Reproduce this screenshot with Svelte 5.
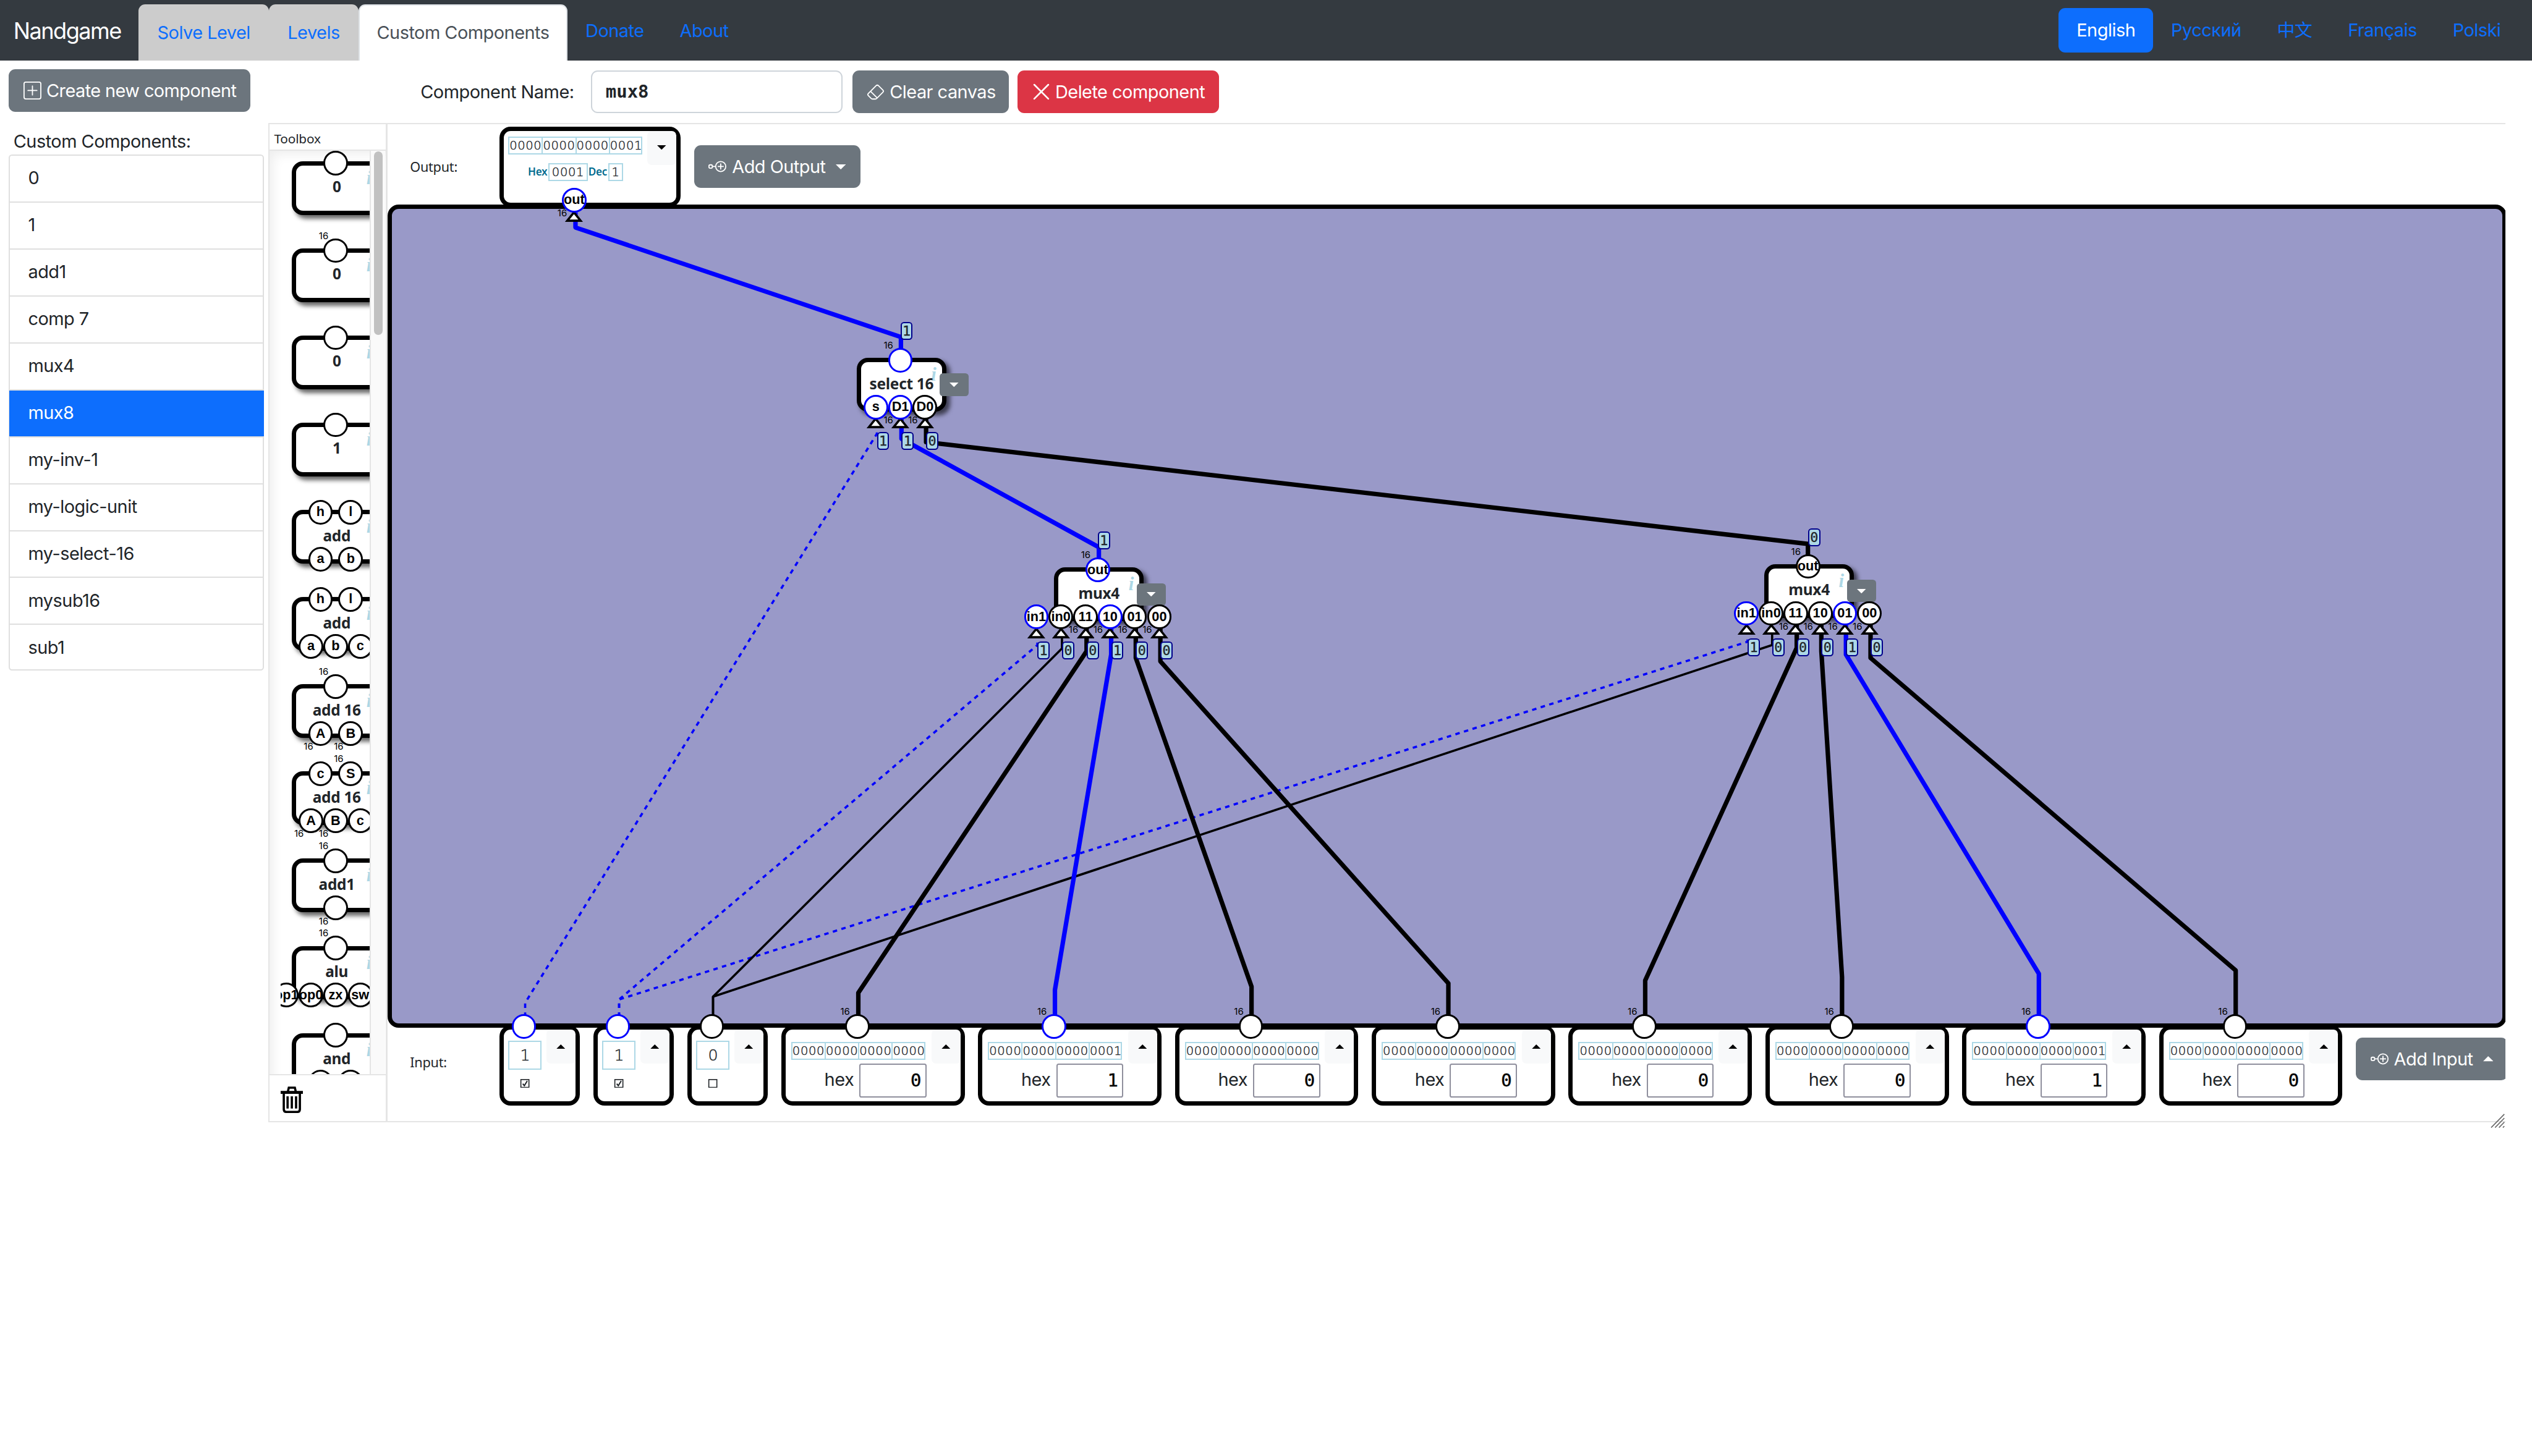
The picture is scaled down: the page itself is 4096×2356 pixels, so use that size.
<script>
  const tabs = ['Solve Level', 'Levels', 'Custom Components'];
  const languages = ['English', 'Русский', '中文', 'Français', 'Polski'];
  const customComponents = [
    '0', '1', 'add1', 'comp 7', 'mux4', 'mux8', 'my-inv-1',
    'my-logic-unit', 'my-select-16', 'mysub16', 'sub1'
  ];
  const selected = 'mux8';

  // A port is { t: label, w: 16-bit, on: carries a non-zero value, v: shown value }
  const p = (t = '', w = false) => ({ t, w });
  const toolbox = [
    { name: '0', out: [p()], ins: [] },
    { name: '0', out: [p('', true)], ins: [] },
    { name: '0', out: [p()], ins: [] },
    { name: '1', out: [p()], ins: [] },
    { name: 'add', out: [p('h'), p('l')], ins: [p('a'), p('b')] },
    { name: 'add', out: [p('h'), p('l')], ins: [p('a'), p('b'), p('c')] },
    { name: 'add 16', out: [p('', true)], ins: [p('A', true), p('B', true)] },
    { name: 'add 16', out: [p('c'), p('S', true)], ins: [p('A', true), p('B', true), p('c')] },
    { name: 'add1', out: [p('', true)], ins: [p('', true)] },
    { name: 'alu', out: [p('', true)], ins: [p('op1'), p('op0'), p('zx'), p('sw'), p('X')] },
    { name: 'and', out: [p()], ins: [p('a'), p('b')] }
  ];

  const q = (t, v, w = false) => ({ t, w, v, on: v === '1' });
  const nodes = [
    {
      name: 'select 16', x: 766, y: 320, out: [q('', '1', true)],
      ins: [q('s', '1'), q('D1', '1', true), q('D0', '0', true)]
    },
    {
      name: 'mux4', x: 942.5, y: 507.5, out: [q('out', '1', true)],
      ins: [q('in1', '1'), q('in0', '0'), q('11', '0', true), q('10', '1', true), q('01', '0', true), q('00', '0', true)]
    },
    {
      name: 'mux4', x: 1577.5, y: 504.5, out: [q('out', '0', true)],
      ins: [q('in1', '1'), q('in0', '0'), q('11', '0', true), q('10', '0', true), q('01', '1', true), q('00', '0', true)]
    }
  ];

  const bits = ['1', '1', '0'];
  const words = [0, 1, 0, 0, 0, 0, 1, 0];

  // Wires run from the output that drives them to the input they feed.
  const wires = [
    { kind: 'bit on', pts: '469.5,917.5 469.5,897 784,388 784,386' },
    { kind: 'bit on', pts: '553.5,917.5 553.5,894 927.5,577 927.5,574' },
    { kind: 'bit on', pts: '553.5,917.5 553.5,894 1562.5,574 1562.5,571' },
    { kind: 'bit', pts: '637.5,918 637.5,891.5 949.5,580 949.5,565' },
    { kind: 'bit', pts: '637.5,918 637.5,891.5 1584.5,577 1584.5,562' },
    { kind: 'word', pts: '767.4,918 767.4,888 971.5,582.5 971.5,560' },
    { kind: 'word on', pts: '943.2,918 943.2,885.5 993.5,585.5 993.5,560' },
    { kind: 'word', pts: '1119,918 1119,882.5 1015.5,588.5 1015.5,560' },
    { kind: 'word', pts: '1295,918 1295,879.5 1037.5,591.5 1037.5,560' },
    { kind: 'word', pts: '1471,918 1471,877 1606.5,579.5 1606.5,557' },
    { kind: 'word', pts: '1647,918 1647,874 1628.5,582.5 1628.5,557' },
    { kind: 'word on', pts: '1823,918 1823,871 1650.5,585.5 1650.5,557' },
    { kind: 'word', pts: '1999,918 1999,868 1672.5,588.5 1672.5,557' },
    { kind: 'word on', pts: '982.5,508 982.5,489.5 806,392.5 806,374' },
    { kind: 'word', pts: '1616.5,506 1616.5,486.5 828,395.5 828,374' },
    { kind: 'word on', pts: '805.5,321 805.5,301.5 514.5,203.5 514.5,190' }
  ];

  const slot = (i, n) => 39 + (i - (n - 1) / 2) * (n === 2 ? 27 : 22);
  const nibbles = (n) => n.toString(2).padStart(16, '0').match(/.{4}/g);
</script>

{#snippet caret(up)}
  <svg class="caret" viewBox="0 0 8 4"><path d={up ? 'M0 4L4 0L8 4z' : 'M0 0L4 4L8 0z'} /></svg>
{/snippet}

{#snippet nodePlus()}
  <svg class="icon" viewBox="0 0 16 16" fill="none" stroke="currentColor">
    <rect x=".5" y="6.5" width="3" height="3" rx="1" />
    <circle cx="11" cy="8" r="4.5" />
    <path d="M3.5 8h3M11 5.3v5.4M8.3 8h5.4" />
  </svg>
{/snippet}

{#snippet port(c, left, top, side)}
  <div class="port" class:on={c.on} style:left="{left}px" style:top="{top}px">
    {#if side === 'in' && c.v !== undefined}
      <svg class="arrow" viewBox="0 0 16 11"><path d="M8 2L14 9.5H2z" /></svg>
    {/if}
    <span class="ring">{c.t}</span>
    {#if c.w}<span class="width {side}">16</span>{/if}
    {#if c.v !== undefined && !c.bare}<span class="value {side}">{c.v}</span>{/if}
  </div>
{/snippet}

{#snippet gate(g)}
  <div class="body"></div>
  <span class="info">i</span>
  <span class="name">{g.name}</span>
  {#if g.x}<button class="menu">{@render caret(false)}</button>{/if}
  {#each g.out as c, i}{@render port(c, slot(i, g.out.length), 2, 'out')}{/each}
  {#each g.ins as c, i}{@render port(c, slot(i, g.ins.length), 44, 'in')}{/each}
{/snippet}

{#snippet binary(n)}
  <div class="binary">
    {#each nibbles(n) as nib}<span>{nib}</span>{/each}
  </div>
{/snippet}

<div class="page">
  <header>
    <div class="brand">Nandgame</div>
    <nav class="tabs">
      {#each tabs as t, i}<a class="tab" class:active={i === 2}>{t}</a>{/each}
      <a class="plain">Donate</a>
      <a class="plain">About</a>
    </nav>
    <nav class="langs">
      {#each languages as l, i}<a class="lang" class:active={i === 0}>{l}</a>{/each}
    </nav>
  </header>

  <main>
    <aside>
      <button class="btn create">
        <svg class="icon" viewBox="0 0 16 16" fill="none" stroke="currentColor">
          <rect x=".5" y=".5" width="15" height="15" rx="1.5" />
          <path d="M8 4v8M4 8h8" stroke-linecap="round" />
        </svg>
        <span>Create new component</span>
      </button>
      <div class="label">Custom Components:</div>
      <ul>
        {#each customComponents as c}<li class:selected={c === selected}>{c}</li>{/each}
      </ul>
    </aside>

    <section class="editor">
      <div class="toolbar">
        <span class="cname">Component Name:</span>
        <div class="field">{selected}</div>
        <button class="btn clear">
          <svg class="icon" viewBox="0 0 16 16" fill="currentColor">
            <path d="M8.086 2.207a2 2 0 0 1 2.828 0l3.879 3.879a2 2 0 0 1 0 2.828l-5.5 5.5A2 2 0 0 1 7.879 15H5.12a2 2 0 0 1-1.414-.586l-2.5-2.5a2 2 0 0 1 0-2.828zm2.121.707a1 1 0 0 0-1.414 0L4.16 7.547l5.293 5.293 4.633-4.633a1 1 0 0 0 0-1.414zM8.746 13.547 3.453 8.254 1.914 9.793a1 1 0 0 0 0 1.414l2.5 2.5a1 1 0 0 0 .707.293H7.88a1 1 0 0 0 .707-.293z" />
          </svg>
          <span>Clear canvas</span>
        </button>
        <button class="btn danger">
          <svg class="icon" viewBox="0 0 16 16" fill="none" stroke="currentColor" stroke-width="1.5" stroke-linecap="round">
            <path d="M1.7 1.7L14.3 14.3M14.3 1.7L1.7 14.3" />
          </svg>
          <span>Delete component</span>
        </button>
      </div>

      <div class="workspace">
        <div class="toolbox">
          <div class="title">Toolbox</div>
          <div class="scroller">
            <div class="window">
              {#each toolbox as g}<div class="gate">{@render gate(g)}</div>{/each}
            </div>
            <div class="track"><div class="thumb"></div></div>
          </div>
          <div class="trash">
            <svg viewBox="0 0 20 24" fill="none" stroke="#000" stroke-width="2">
              <path d="M0 5.3h20" stroke-width="2.6" />
              <path d="M6.5 4.5L7.3 1.1H12.7L13.5 4.5" />
              <path d="M2.8 6V20.5Q2.8 22.8 5 22.8H15Q17.2 22.8 17.2 20.5V6" />
              <path d="M6.2 8.8V19.8M10 8.8V19.8M13.8 8.8V19.8" />
            </svg>
          </div>
        </div>

        <div class="board">
          <div class="row outputs">
            <span class="rowlabel">Output:</span>
            <div class="card output">
              <div class="content">
                {@render binary(1)}
                <div class="formats">
                  <b>Hex</b><span class="box">0001</span><b>Dec</b><span class="box">1</span>
                </div>
              </div>
              <button class="toggle">{@render caret(false)}</button>
              {@render port({ t: 'out', w: true, on: true, v: '', bare: true }, 63, 62, 'in')}
            </div>
            <button class="btn add">{@render nodePlus()}<span>Add Output</span>{@render caret(false)}</button>
          </div>

          <div class="canvas"></div>

          <svg class="wires" viewBox="346.5 183 1894.5 736">
            {#each wires as w}<polyline class={w.kind} points={w.pts} />{/each}
          </svg>
          <div class="nodes">
            {#each nodes as g}
              <div class="gate placed" style:left="{g.x - 346.5}px" style:top="{g.y - 111}px">{@render gate(g)}</div>
            {/each}
          </div>

          <div class="row inputs">
            <span class="rowlabel">Input:</span>
            {#each bits as b}
              <div class="card bit">
                <div class="content">
                  <span class="digit">{b}</span>
                  <svg class="check" viewBox="0 0 9 8" fill="none" stroke="#212529">
                    <rect x=".9" y=".5" width="7.2" height="7" stroke-width=".9" />
                    {#if b === '1'}<path d="M2.6 4.2L4 5.9L6.6 1.6" stroke-width="1.1" />{/if}
                  </svg>
                </div>
                <button class="toggle">{@render caret(true)}</button>
                {@render port({ t: '', on: b === '1' }, 22, 1, 'out')}
              </div>
            {/each}
            {#each words as w}
              <div class="card word">
                <div class="content">
                  {@render binary(w)}
                  <div class="hex"><span>hex</span><span class="entry">{w}</span></div>
                </div>
                <button class="toggle">{@render caret(true)}</button>
                {@render port({ t: '', w: true, on: w === 1 }, 68, 1, 'out')}
              </div>
            {/each}
            <button class="btn add">{@render nodePlus()}<span>Add Input</span>{@render caret(true)}</button>
          </div>
        </div>
      </div>
      <svg class="resizer" viewBox="0 0 13 13" stroke="#666" stroke-width=".9">
        <path d="M.5 12.5L12.3 .5M4 12.5L12.3 4M7.5 12.5L12.3 7.6M11 12.5L12.3 11.2" />
      </svg>
    </section>
  </main>
</div>

<style>
  :global(body) { margin: 0; background: #fff; overflow: hidden; }
  .page, .page * { box-sizing: border-box; }
  .page {
    zoom: 1.80919;
    width: 2264px;
    height: 1302px;
    overflow: hidden;
    background: #fff;
    color: #212529;
    font: 16px/24px Inter, "Noto Sans CJK SC", sans-serif;
    letter-spacing: -0.29px;
  }
  button { border: 0; margin: 0; padding: 0; font: inherit; letter-spacing: inherit; color: inherit; }
  svg { display: block; flex: none; }

  header { display: flex; height: 54px; background: #343a40; }
  .brand { width: 124px; padding: 12.5px 0 0 12px; font-size: 20px; line-height: 30px; color: #fff; letter-spacing: -0.85px; }
  .tabs { display: flex; padding-top: 4px; color: #0d6efd; }
  .tab {
    width: 116.5px; height: 50px; padding-top: 13px; text-align: center;
    background: #ccc; border-radius: 6px 6px 0 0;
  }
  .tab:nth-child(2) { width: 80px; }
  .tab.active { width: 187px; background: #fff; color: #495057; border: 1.2px solid #dee2e6; border-bottom: 0; padding-top: 12px; }
  .plain { padding: 11.5px 16px 0; }
  .langs { display: flex; margin-left: auto; padding: 7px 12px 0 0; color: #0d6efd; }
  .lang { height: 40px; padding: 8px 16px; border-radius: 6px; }
  .lang.active { background: #0d6efd; color: #fff; }

  main { display: flex; }
  aside { width: 240px; padding: 8px 4px 0 8px; }
  .btn {
    display: flex; align-items: center; height: 38px; border-radius: 6px;
    background: #6c757d; color: #fff; white-space: nowrap; padding: 0 13px; flex: none;
  }
  .icon { width: 16px; height: 16px; margin-right: 4.5px; }
  .create { width: 216px; letter-spacing: -0.33px; }
  .label { height: 38px; padding: 14.5px 0 0 4px; }
  ul { list-style: none; margin: 0; padding: 0; border: 1.2px solid #dfdfdf; border-radius: 3px; width: 228px; height: 462px; }
  li { height: 42px; padding: 8px 16px; border-bottom: 1.2px solid #dfdfdf; }
  li:last-child { border-bottom: 0; }
  li.selected { background: #0d6efd; color: #fff; margin: 0 -1px; padding-left: 17px; }

  .editor { position: relative; width: 2000px; }
  .toolbar { display: flex; align-items: center; height: 56px; }
  .cname { width: 288.5px; padding-left: 136px; white-space: nowrap; }
  .field {
    width: 225px; height: 38px; margin-right: 8.5px; padding: 6px 12px; border: 1.2px solid #ced4da;
    border-radius: 6px; font: bold 16px/24px "DejaVu Sans Mono", monospace; letter-spacing: 0;
  }
  .clear { width: 140px; margin-right: 8px; }
  .danger { width: 180px; background: #dc3545; }

  .workspace { display: flex; width: 2000px; height: 894px; overflow: hidden; border: 1.2px solid #e5e5e5; border-right: 0; }
  .toolbox { width: 105.5px; flex: none; display: flex; flex-direction: column; border-right: 1.7px solid #e5e5e5; }
  .title { height: 23.5px; padding: 3px 0 0 4px; font: 11.5px/20px "Noto Sans", sans-serif; letter-spacing: -0.1px; border-bottom: 1.2px solid #e5e5e5; }
  .scroller { display: flex; height: 826px; flex: none; box-shadow: inset 7px 7px 10px -4px rgba(0, 0, 0, .07); }
  .window { width: 79.5px; margin-left: 10px; padding: 9.5px 0 0 10px; overflow: hidden; }
  .window .gate { margin-bottom: 30px; }
  .track { width: 14px; background: #fafafa; border-left: 1.2px solid #e5e5e5; padding: 1px 0 0 2.5px; }
  .thumb { width: 8px; height: 164px; border-radius: 4px; background: #c1c1c1; }
  .trash { flex: 1; border-top: 1.2px solid #e5e5e5; padding: 10px 0 0 10px; }
  .trash svg { width: 20px; height: 24px; }

  .board { position: relative; width: 1895px; flex: none; }
  .row { display: flex; }
  .rowlabel { width: 100px; margin-right: -12px; padding-left: 20px; font: 12px/20px "Noto Sans", sans-serif; letter-spacing: -0.15px; flex: none; }
  .outputs { height: 72px; padding-top: 2px; gap: 12px; align-items: center; }
  .outputs .card, .outputs .btn { margin-bottom: -2px; }
  .outputs .rowlabel { padding-top: 2px; }
  .canvas { position: relative; z-index: 1; height: 736px; border: 4px solid #000; border-radius: 10px; background: #9999c8; }
  .wires { position: absolute; z-index: 2; left: 0; top: 72px; width: 1894.5px; height: 736px; overflow: visible; }
  polyline { fill: none; stroke: #000; stroke-linejoin: round; }
  polyline.bit { stroke-width: 2; }
  polyline.word { stroke-width: 4; }
  polyline.on { stroke: #00f; }
  polyline.bit.on { stroke-dasharray: 4 4; }
  .nodes { position: absolute; z-index: 3; left: 0; top: 0; }

  .inputs { gap: 12px; margin-top: -2px; align-items: flex-start; }
  .inputs .rowlabel { margin-top: 23px; }
  .card {
    position: relative; display: flex; justify-content: space-between; height: 72px; flex: none;
    border: 4px solid #000; border-radius: 10px; background: #fff;
  }
  .inputs .card { z-index: 2; }
  .output { width: 162px; }
  .bit.card { width: 72px; }
  .word.card { width: 164px; }
  .content { display: flex; flex-direction: column; align-items: center; padding: 5px 0 0 4px; }
  .word .content { padding: 11px 0 0 5px; }
  .bit .content { padding-top: 10px; }
  .toggle { display: flex; justify-content: center; width: 26px; height: 30.5px; border-radius: 4px; background: #f8f9fa; color: #000; padding-top: 13px; }
  .caret { width: 8px; height: 4px; fill: currentColor; }

  .binary { display: flex; width: 120px; height: 16px; border: 1.2px solid #add8e6; }
  .binary span { flex: 1; text-align: center; }
  .binary span + span { border-left: 1.2px solid #add8e6; }
  .binary, .box, .digit { -webkit-text-stroke: .25px #212529; }
  .binary, .box { font: 200 10.8px/14px "DejaVu Sans", "DejaVu Sans Light", sans-serif; letter-spacing: .35px; }
  .formats { display: flex; margin-top: 8px; height: 16px; }
  .formats b { font: 600 9.5px/15px "Noto Sans", sans-serif; letter-spacing: -0.2px; color: #006b8f; margin: 0 1px 0 .5px; }
  .box { border: 1.2px solid #add8e6; padding: 0 2.1px; }
  .digit { width: 30px; height: 26px; border: 1.2px solid #add8e6; text-align: center; font: 200 14px/24px "DejaVu Sans", "DejaVu Sans Light", sans-serif; }
  .check { width: 9px; height: 8px; margin-top: 8px; }
  .hex { display: flex; align-self: flex-end; margin: 3.5px -1px 0 0; gap: 5px; }
  .hex > span:first-child { line-height: 29px; }
  .entry {
    width: 60px; height: 30px; border: 1.2px solid #8f8f9d; border-radius: 2px; padding-right: 3.5px;
    text-align: right; font: 500 16px/28.5px "DejaVu Sans Mono", monospace; letter-spacing: 0; color: #000;
    -webkit-text-stroke: .25px #000;
  }
  .add .icon { margin-right: 5px; }
  .add .caret { width: 9px; height: 4.5px; margin-left: 9px; }
  .inputs .add { margin-top: 11px; }

  .gate { position: relative; width: 80px; height: 48px; flex: none; }
  .gate.placed { position: absolute; }
  .body {
    height: 48px; border: 4px solid #000; border-radius: 10px; background: #fff;
    box-shadow: 3px 3px 4px rgba(0, 0, 0, .6);
  }
  .name {
    position: absolute; left: -20px; width: 120px; top: 13px; text-align: center;
    font: 700 13.5px/20px "Noto Sans", sans-serif; letter-spacing: -0.15px;
  }
  .info { position: absolute; left: 66.5px; top: 5px; font: italic bold 17px/20px "Liberation Serif", serif; color: #add8e6; }
  .menu { position: absolute; left: 74px; top: 14px; width: 26px; height: 20px; border-radius: 3px; background: #6c757d; color: #fff; padding: 6px 9px; }
  .port { position: absolute; width: 0; height: 0; z-index: 4; }
  .ring {
    position: absolute; left: -11px; top: -11px; width: 22px; height: 22px; border: 2px solid #000; border-radius: 50%;
    background: #fff; color: #000; display: flex; align-items: center; justify-content: center;
    font: bold 12px/18px "Liberation Sans", Arial, sans-serif; letter-spacing: 0;
  }
  .on .ring { border-color: #00f; }
  .card .port { margin: -4px 0 0 -4px; }
  .card.output .port { margin: 0; }
  .arrow { position: absolute; left: -8px; top: 8.7px; width: 16px; height: 11px; fill: #fff; stroke: #000; stroke-width: 2; }
  .width { position: absolute; left: -15px; font: 8.3px/8px Inter, sans-serif; letter-spacing: 0; color: #000; }
  .width.out { top: -17px; }
  .width.in { top: 8px; }
  .value {
    position: absolute; width: 11px; height: 16px; border: 1.2px solid #00008b; border-radius: 3px; background: #add8e6;
    text-align: center; font: 12px/14px "DejaVu Sans Mono", monospace; letter-spacing: 0; display: flex; justify-content: center;
    -webkit-text-stroke: .2px #212529;
  }
  .value.out { left: 0; top: -34px; }
  .value.in { left: 1px; top: 22.3px; }
  .resizer { position: absolute; right: 0; bottom: -5px; width: 13px; height: 13px; }
</style>
